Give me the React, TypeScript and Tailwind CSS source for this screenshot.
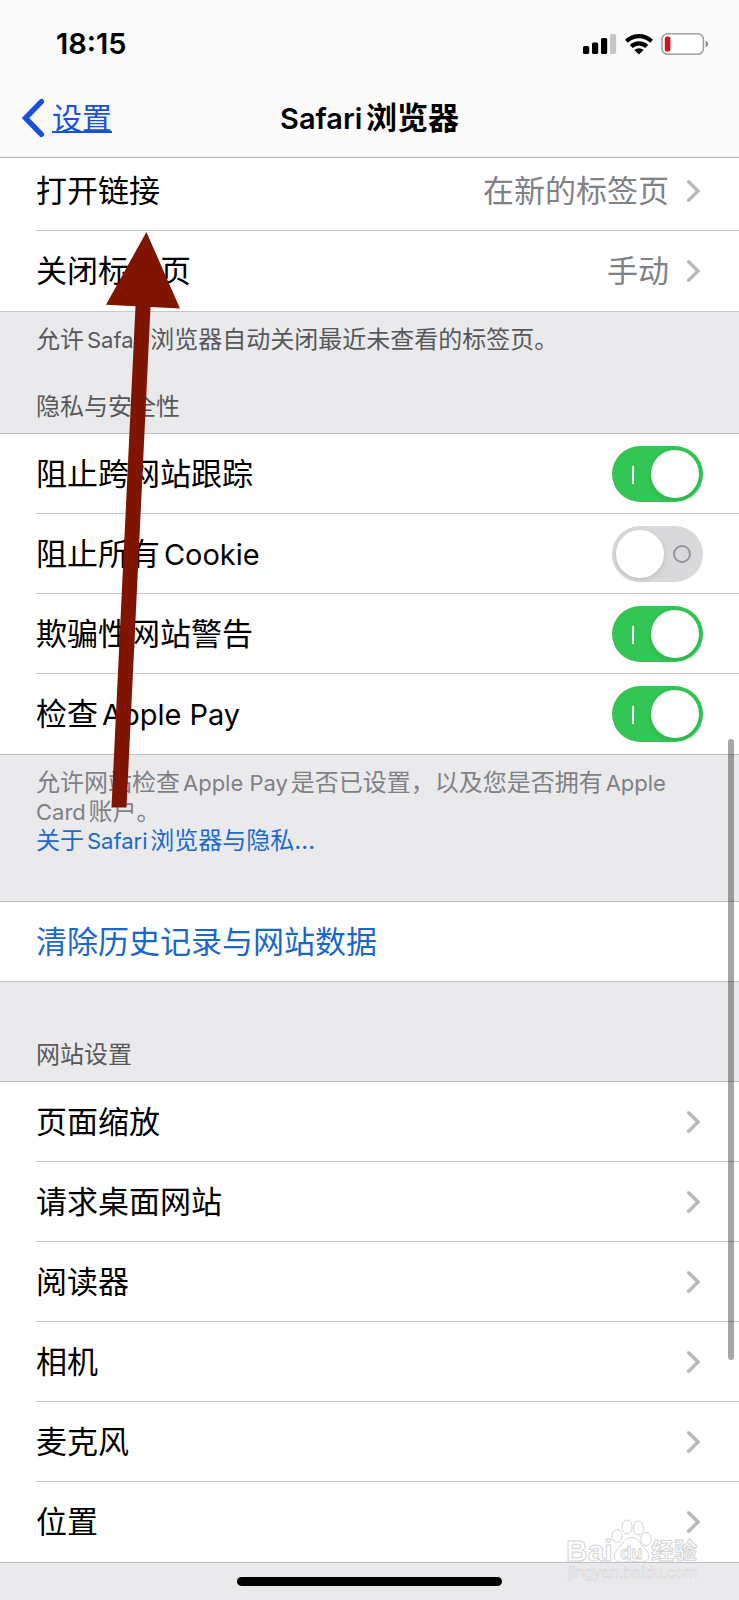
import { useState } from "react";

function Chevron() {
  return (
    <svg className="h-6 w-4 shrink-0" viewBox="0 0 16 24" fill="none" stroke="#b9b9bc" strokeWidth="3.4" strokeLinecap="round" strokeLinejoin="miter" aria-hidden="true">
      <path d="M1.6 2.8 11 12 1.6 21.2" />
    </svg>
  );
}

/** Sets Latin runs slightly smaller than the Chinese text around them. */
function Mixed({ text, latin }: { text: string; latin: string }) {
  return (
    <>
      {text.split(/([A-Za-z]+(?: [A-Za-z]+)*)/).map((run, i) =>
        i % 2 === 1 ? (
          <span key={i} className={latin}>
            {run}
          </span>
        ) : (
          run
        ),
      )}
    </>
  );
}

function LinkRow({ label, value }: { label: string; value?: string }) {
  return (
    <li className="group pl-9">
      <a href="#" className="flex h-20 items-center justify-between border-b border-[#c8c8cb] pr-9 group-last:border-transparent">
        <span>{label}</span>
        <span className="flex items-center gap-[18px] text-[#808085]">
          {value}
          <Chevron />
        </span>
      </a>
    </li>
  );
}

function SwitchRow({ label, initial }: { label: string; initial: boolean }) {
  const [on, setOn] = useState(initial);
  return (
    <li className="group pl-9">
      <label className="flex h-20 items-center justify-between border-b border-[#c8c8cb] pr-9 group-last:border-transparent">
        <span>
          <Mixed text={label} latin="text-[29px] leading-none" />
        </span>
        <span className="relative flex h-14 w-[91px] shrink-0">
          <input
            type="checkbox"
            role="switch"
            checked={on}
            onChange={(e) => setOn(e.target.checked)}
            className="h-14 w-full appearance-none rounded-full bg-[#d9d9dc] checked:bg-[#34c654]"
          />
          {on ? (
            <>
              <span className="pointer-events-none absolute top-5 left-5 h-[18px] w-0.5 bg-white" />
              <span className="pointer-events-none absolute top-1 right-1 size-12 rounded-full bg-white shadow-[0_2px_6px_rgba(0,0,0,0.12)]" />
            </>
          ) : (
            <>
              <span className="pointer-events-none absolute top-[19px] right-3 size-[18px] rounded-full border-2 border-[#949497]" />
              <span className="pointer-events-none absolute top-1 left-1 size-12 rounded-full bg-white shadow-[0_2px_6px_rgba(0,0,0,0.12)]" />
            </>
          )}
        </span>
      </label>
    </li>
  );
}

function StatusIcons() {
  return (
    <div className="flex items-center gap-2">
      <svg className="h-6 w-[34px]" viewBox="0 0 34 24" aria-hidden="true">
        <rect x="0" y="14" width="6.2" height="8" rx="1.6" />
        <rect x="9" y="10.5" width="6.2" height="11.5" rx="1.6" />
        <rect x="18" y="6" width="6.2" height="16" rx="1.6" />
        <rect x="27" y="2" width="6.2" height="20" rx="1.6" fill="#c6c6c6" />
      </svg>
      <svg className="h-6 w-7" viewBox="0 0 28 24" fill="none" stroke="#000" strokeWidth="4.2" aria-hidden="true">
        <path d="M1.4 9.2a18 18 0 0 1 25.2 0" />
        <path d="M6.3 14.5a11 11 0 0 1 15.4 0" />
        <path d="M14 22.6 9.4 18.1a6.6 6.6 0 0 1 9.2 0Z" fill="#000" stroke="none" />
      </svg>
      <svg className="h-6 w-12" viewBox="0 0 48 24" aria-hidden="true">
        <rect x="1" y="1.8" width="41.4" height="20.4" rx="5.6" fill="#fff" stroke="#a1a1a1" strokeWidth="1.6" />
        <rect x="3.8" y="4.6" width="5.6" height="15" rx="2.2" fill="#d90f1e" />
        <path d="M44.6 8.5c3.4 1.6 3.4 5.4 0 7Z" fill="#8e8e8e" />
      </svg>
    </div>
  );
}

function Watermark() {
  return (
    <svg className="pointer-events-none absolute right-9 bottom-3 h-[72px] w-[140px]" viewBox="0 0 140 72" fill="#fff" stroke="#d4d4d6" strokeWidth="1" aria-hidden="true">
      <g fontFamily="'Liberation Sans', 'Noto Sans CJK SC', sans-serif" fontWeight="700">
        <text x="3" y="45" fontSize="30">Bai</text>
        <text x="88" y="43" fontSize="23">经验</text>
      </g>
      <ellipse cx="54" cy="20" rx="5" ry="6.5" />
      <ellipse cx="64" cy="11" rx="5" ry="7" />
      <ellipse cx="75.5" cy="12" rx="5" ry="7" />
      <ellipse cx="83" cy="23" rx="5.2" ry="6.5" />
      <path d="M68.500 21.500c8 0 9 8 14 12 6 5 4 12.500-4 12.500-4 0-6-1-10-1s-6 1-10 1c-8 0-10-7.500-4-12.500 5-4 6-12 14-12Z" />
      <text x="57.500" y="43" fontSize="18" fontWeight="700" fontFamily="'Liberation Sans', sans-serif">du</text>
      <text x="5" y="62" fontSize="16" fill="#f6f6f7" strokeWidth=".6" fontFamily="'Liberation Sans', sans-serif">jingyan.baidu.com</text>
    </svg>
  );
}

export default function App() {
  return (
    <div className="relative min-h-screen overflow-hidden bg-[#eaeaec] font-[Inter,'Noto_Sans_CJK_SC',sans-serif] text-[31px] leading-10 text-black [text-autospace:normal]">
      <header className="relative z-10 border-b border-[#b2b2b4] bg-[#fafafa]">
        <div className="flex h-[88px] items-center justify-between pr-[30px] pl-14">
          <time className="text-[29px] font-semibold">18:15</time>
          <StatusIcons />
        </div>
        <nav className="grid h-[69px] grid-cols-[1fr_auto_1fr] items-center pb-2.5">
          <a href="#" className="flex items-center gap-1.5 pl-[22px] text-[#1650dc]">
            <svg className="h-10 w-6" viewBox="0 0 24 40" fill="none" stroke="currentColor" strokeWidth="5.4" strokeLinecap="round" aria-hidden="true">
              <path d="M19.4 3.6 3.6 20l15.800 16.4" />
            </svg>
            <span className="text-[30px] underline decoration-2 underline-offset-2">设置</span>
          </a>
          <h1 className="font-semibold">
            <Mixed text="Safari浏览器" latin="text-[29px] leading-none" />
          </h1>
        </nav>
      </header>

      <main>
        <ul className="-mt-[7px] border-b border-[#c8c8cb] bg-white">
          <LinkRow label="打开链接" value="在新的标签页" />
          <LinkRow label="关闭标签页" value="手动" />
        </ul>
        <p className="px-9 pt-3 text-2xl/8 text-[#58585c]">
          <Mixed text="允许Safari浏览器自动关闭最近未查看的标签页。" latin="text-[22px] leading-none" />
        </p>

        <section>
          <h2 className="px-9 pt-[35px] pb-2.5 text-2xl/8 text-[#58585c]">隐私与安全性</h2>
          <ul className="border-y border-[#c0c0c4] bg-white">
            <SwitchRow label="阻止跨网站跟踪" initial={true} />
            <SwitchRow label="阻止所有Cookie" initial={false} />
            <SwitchRow label="欺骗性网站警告" initial={true} />
            <SwitchRow label="检查Apple Pay" initial={true} />
          </ul>
          <div className="px-9 pt-[13px] pb-[46px] text-2xl/[29px] text-[#808086]">
            <p>
              <Mixed text="允许网站检查Apple Pay是否已设置，以及您是否拥有Apple Card账户。" latin="text-[22px] leading-none" />
            </p>
            <a href="#" className="block text-[#1a6bd0]">
              <Mixed text="关于Safari浏览器与隐私..." latin="text-[22px] leading-none" />
            </a>
          </div>
        </section>

        <div className="border-y border-[#c0c0c4] bg-white">
          <button type="button" className="flex h-[79px] w-full items-center px-9 text-left text-[#1767cc]">清除历史记录与网站数据</button>
        </div>

        <section>
          <h2 className="px-9 pt-[57px] pb-2.5 text-2xl/8 text-[#58585c]">网站设置</h2>
          <ul className="border-y border-[#c0c0c4] bg-white">
            <LinkRow label="页面缩放" />
            <LinkRow label="请求桌面网站" />
            <LinkRow label="阅读器" />
            <LinkRow label="相机" />
            <LinkRow label="麦克风" />
            <LinkRow label="位置" />
          </ul>
        </section>
      </main>

      <footer className="flex justify-center py-3.5">
        <div className="h-[9px] w-[265px] rounded-full bg-black" />
      </footer>

      <div className="pointer-events-none absolute top-[739px] right-[5px] h-[621px] w-1.5 rounded-full bg-black/35" />
      <svg className="pointer-events-none absolute top-[232px] left-[106px] h-[576px] w-[75px]" viewBox="0 0 75 576" fill="#7f1400" aria-hidden="true">
        <path d="M40.4 0 74 76.5 44.500 75 20.500 575.5H5.500L29.5 74.2 0 72.7Z" />
      </svg>
      <Watermark />
    </div>
  );
}
